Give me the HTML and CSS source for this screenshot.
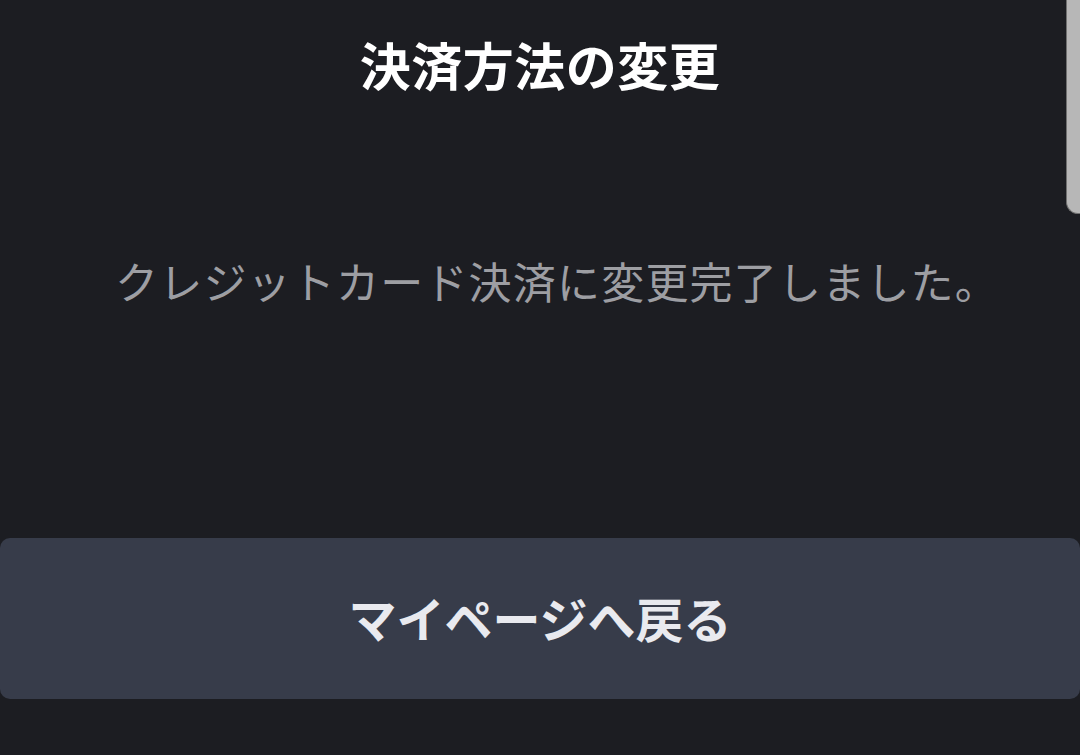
FILE: index.html
```html
<!DOCTYPE html>
<html lang="ja">
<head>
	<meta charset="utf-8">
	<title>決済方法の変更</title>
	<link rel="stylesheet" href="styles.css">
</head>
<body>
	<div class="page">
		<h1 class="title">決済方法の変更</h1>
		<p class="message">クレジットカード決済に変更完了しました。</p>
		<a class="back" href="#">マイページへ戻る</a>
	</div>
	<div class="scroll-thumb"></div>
</body>
</html>
```

FILE: styles.css
```css
html, body { margin: 0; padding: 0; }
body {
	width: 1080px;
	height: 755px;
	overflow: hidden;
	background-color: #1c1d22;
	font-family: "Noto Sans CJK JP", "Noto Sans", sans-serif;
	position: relative;
}
.page { display: flex; flex-direction: column; align-items: stretch; }

.title {
	margin: 0;
	height: 128px;
	padding-bottom: 8px;
	display: flex;
	align-items: center;
	justify-content: center;
	font-size: 51px;
	font-weight: 700;
	letter-spacing: 0.5px;
	color: #ffffff;
}

.message {
	margin: 114px 0 0;
	padding-left: 34px;
	height: 60px;
	line-height: 60px;
	text-align: center;
	font-size: 43px;
	font-weight: 400;
	letter-spacing: 1.2px;
	color: #9d9ea3;
}

.back {
	margin-top: 228px;
	height: 157px;
	padding-bottom: 4px;
	display: flex;
	align-items: center;
	justify-content: center;
	background-color: #373c4a;
	border-radius: 10px;
	font-size: 48px;
	font-weight: 700;
	color: #e9eaef;
	text-decoration: none;
}

/* scrollbar thumb of the captured screen */
.scroll-thumb {
	position: absolute;
	top: 0;
	right: 0;
	width: 13px;
	height: 213px;
	background-color: #b7b7b7;
	border-left: 1px solid #707070;
	border-bottom: 1px solid #707070;
	border-bottom-left-radius: 12px;
}
```
